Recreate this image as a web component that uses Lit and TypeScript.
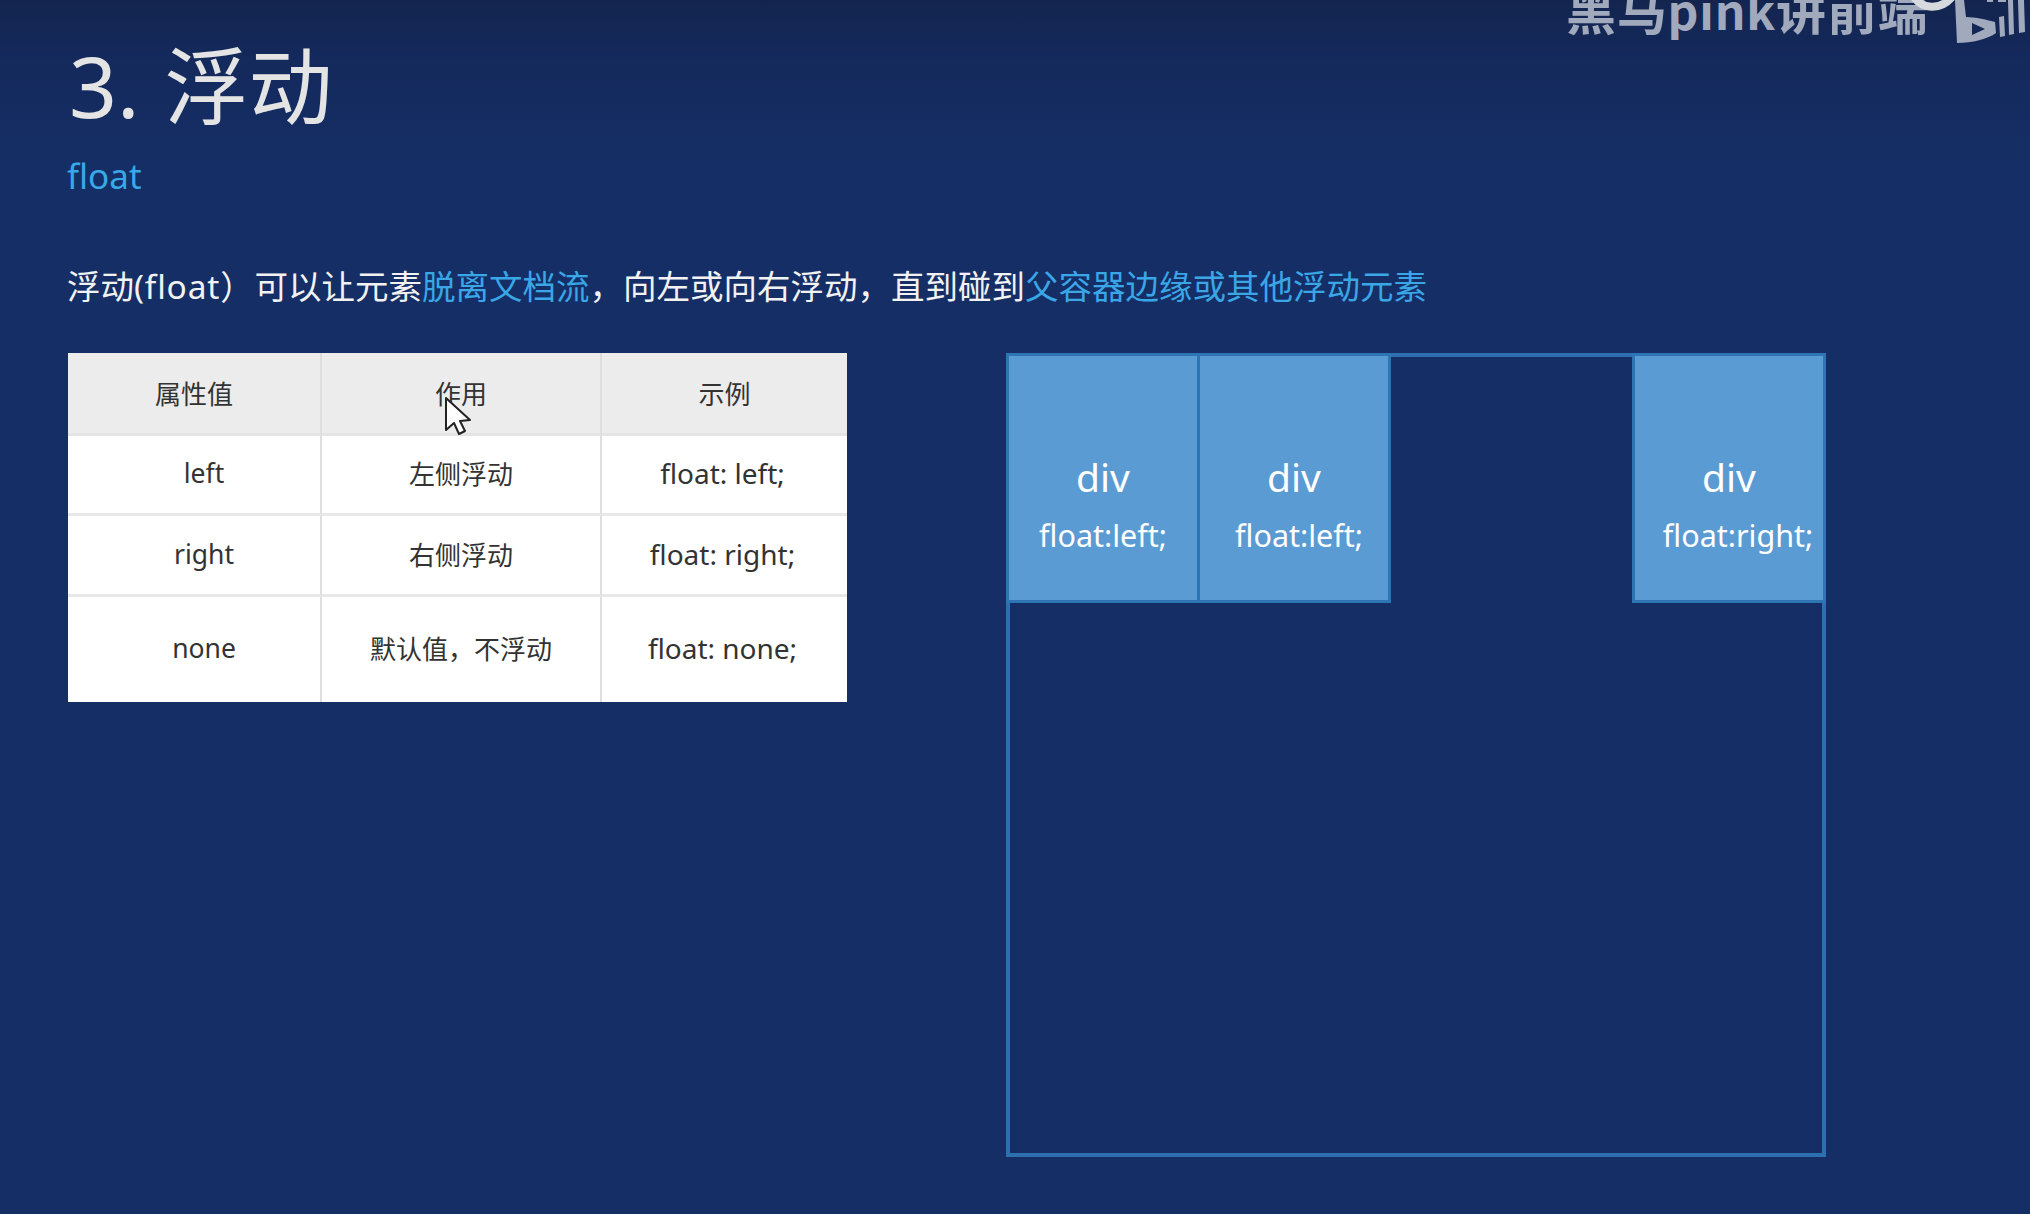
import { LitElement, html, css } from "lit";
import { customElement } from "lit/decorators.js";

const rows = [
  { cls: "head", a: "属性值", b: "作用", c: "示例", latin: false },
  { cls: "r", a: "left", b: "左侧浮动", c: "float: left;", latin: true },
  { cls: "r", a: "right", b: "右侧浮动", c: "float: right;", latin: true },
  { cls: "r tall", a: "none", b: "默认值，不浮动", c: "float: none;", latin: true },
];

@customElement("app-root")
export class AppRoot extends LitElement {
  static styles = css`
    :host {
      display: block;
      width: 2030px;
      height: 1214px;
      overflow: hidden;
      position: relative;
      font-family: "Noto Sans", "Noto Sans CJK SC", sans-serif;
      background: linear-gradient(180deg, #13254f 0, #14295c 60px, #152f66 170px, #152f66 100%);
      color: #fff;
    }
    .slide {
      display: flex;
      flex-direction: column;
      padding: 0 0 0 68px;
      box-sizing: border-box;
      height: 100%;
    }
    .title {
      height: 159px;
      padding-top: 36px;
      box-sizing: border-box;
      font-size: 84px;
      line-height: 100px;
      font-weight: 400;
      color: #e4e4e4;
      margin: 0 0 0 1px;
      word-spacing: 3px;
    }
    .sub {
      height: 51px;
      margin-left: -1px;
      font-size: 35px;
      line-height: 34px;
      color: #38a8e8;
    }
    .desc {
      margin-top: 48px;
      margin-left: -1px;
      height: 95px;
      font-size: 33.5px;
      line-height: 56px;
      color: #f2f2f2;
      white-space: nowrap;
    }
    .desc em { font-style: normal; color: #3aa6e6; }
    .desc .lat { letter-spacing: 0.8px; }
    .content {
      display: flex;
      align-items: flex-start;
      gap: 159px;
    }
    .table {
      width: 779px;
      display: grid;
      grid-template-columns: 254px 280px 245px;
      grid-template-rows: 83px 80px 81px 105px;
      background: #fff;
      color: #333;
      font-size: 26px;
      box-sizing: border-box;
    }
    .cell {
      display: flex;
      align-items: center;
      justify-content: center;
      border-right: 2px solid #dedede;
      border-bottom: 3px solid #e8e8e8;
      box-sizing: border-box;
      padding-bottom: 3px;
    }
    .cell.last { border-right: none; }
    .cell.head { background: #ececec; border-bottom-color: #e4e4e4; padding-bottom: 0; }
    .cell.tall { border-bottom: none; padding-bottom: 4px; }
    .cell.val span { margin-left: 20px; font-size: 26.5px; }
    .cell.code span { margin-right: 4px; font-size: 28px; }
    .stage {
      width: 820px;
      height: 804px;
      box-sizing: border-box;
      border: 4px solid #2e6fb0;
    }
    .box {
      width: 194px;
      height: 250px;
      box-sizing: border-box;
      margin-top: -4px;
      background: #5b9bd3;
      border: 3px solid #2e75b6;
      display: flex;
      flex-direction: column;
      align-items: center;
      color: #fff;
    }
    .box.left { float: left; }
    .box.first { margin-left: -4px; }
    .box.second { margin-left: -3px; }
    .box.right { float: right; margin-right: -4px; }
    .box .name { font-size: 39px; line-height: 50px; margin-top: 96px; }
    .box .rule { font-size: 30.5px; line-height: 40px; margin-top: 13px; white-space: nowrap; }
    .box.second .rule { margin-left: 10px; }
    .box.right .rule { margin-left: 18px; }
    .mark {
      position: absolute;
      left: 1566px;
      top: -22px;
      font-size: 50px;
      line-height: 60px;
      font-weight: 700;
      letter-spacing: 0.8px;
      color: #a1a9bc;
      white-space: nowrap;
      font-family: "Noto Sans CJK SC", "Noto Sans", sans-serif;
    }
    .mark span { font-size: 48px; }
    .logo { position: absolute; left: 1880px; top: 0; }
    .cursor { position: absolute; left: 443px; top: 396px; }
  `;

  render() {
    return html`
      <div class="slide">
        <h1 class="title">3. 浮动</h1>
        <div class="sub">float</div>
        <div class="desc">浮动<span class="lat">(float）</span>可以让元素<em>脱离文档流</em>，向左或向右浮动，直到碰到<em>父容器边缘或其他浮动元素</em></div>
        <div class="content">
          <div class="table">
            ${rows.map(
              (r) => html`
                <div class="cell ${r.cls} ${r.latin ? "val" : ""}"><span>${r.a}</span></div>
                <div class="cell ${r.cls}"><span>${r.b}</span></div>
                <div class="cell last ${r.latin ? "code" : ""} ${r.cls}"><span>${r.c}</span></div>
              `
            )}
          </div>
          <div class="stage">
            <div class="box left first"><div class="name">div</div><div class="rule">float:left;</div></div>
            <div class="box left second"><div class="name">div</div><div class="rule">float:left;</div></div>
            <div class="box right"><div class="name">div</div><div class="rule">float:right;</div></div>
          </div>
        </div>
      </div>
      <div class="mark">黑马<span>pink</span>讲前端</div>
      <svg class="logo" width="150" height="60" viewBox="0 0 150 60">
        <path d="M34 -3 C42 9 60 11 72 -3" fill="none" stroke="#d6d9de" stroke-width="8"/>
        <path fill-rule="evenodd" fill="#a1a9bc" d="M75 0 L84 0 L86 17 C95 17 108 20 115 22 L116 33 C108 39 92 43 77 43 Z M92 23 L92 35 L105 29 Z"/>
        <path fill="#a1a9bc" d="M119 17 L124 16 L125 36 L120 37 Z M128 0 L133 0 L134 34 L129 35 Z M138 0 L144 0 L145 32 L139 33 Z M107 0 L113 0 L113 2 L107 2 Z M118 0 L126 0 L126 2 L118 2 Z"/>
      </svg>
      <svg class="cursor" width="32" height="40" viewBox="0 0 32 40">
        <path d="M3 2 L3 34 L11 27 L16 38 L22 35 L17 25 L27 24 Z" fill="#fff" stroke="#222" stroke-width="2" stroke-linejoin="round"/>
      </svg>
    `;
  }
}
